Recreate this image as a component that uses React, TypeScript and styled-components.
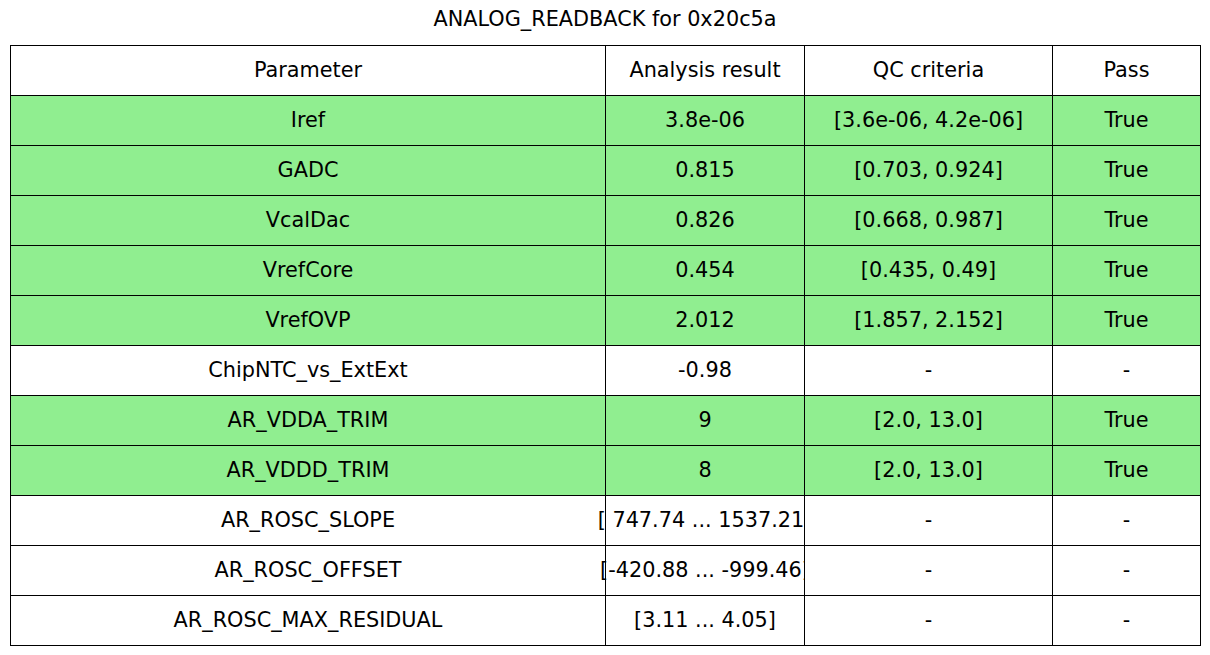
import styled, { createGlobalStyle } from 'styled-components';

const GlobalStyle = createGlobalStyle`
  html, body {
    margin: 0;
    padding: 0;
    background: #ffffff;
  }
  body {
    font-family: 'DejaVu Sans', 'Liberation Sans', sans-serif;
    color: #000000;
  }
`;

const Page = styled.div`
  width: 1210px;
  height: 655px;
  box-sizing: border-box;
  padding: 0 10px;
  display: flex;
  flex-direction: column;
`;

const Title = styled.h1`
  margin: 0;
  height: 45px;
  box-sizing: border-box;
  padding-top: 6px;
  text-align: center;
  font-size: 20.8px;
  font-weight: 400;
  line-height: 26px;
`;

const Table = styled.div`
  display: grid;
  grid-template-columns: 595px 199px 248px 148px;
  grid-auto-rows: 50px;
  width: 1191px;
  border-top: 1px solid #000;
  border-left: 1px solid #000;
  box-sizing: border-box;
`;

// positioned so a later cell paints over text spilling out of an earlier one
const Cell = styled('div')<{ pass?: boolean }>`
  position: relative;
  display: flex;
  align-items: center;
  justify-content: center;
  white-space: nowrap;
  border-right: 1px solid #000;
  border-bottom: 1px solid #000;
  box-sizing: border-box;
  background: ${(p) => (p.pass ? '#90ee90' : '#ffffff')};
  font-size: 20.8px;
  line-height: 1;
`;

type Row = [string, string, string, string];

const header: Row = ['Parameter', 'Analysis result', 'QC criteria', 'Pass'];

const rows: Row[] = [
  ['Iref', '3.8e-06', '[3.6e-06, 4.2e-06]', 'True'],
  ['GADC', '0.815', '[0.703, 0.924]', 'True'],
  ['VcalDac', '0.826', '[0.668, 0.987]', 'True'],
  ['VrefCore', '0.454', '[0.435, 0.49]', 'True'],
  ['VrefOVP', '2.012', '[1.857, 2.152]', 'True'],
  ['ChipNTC_vs_ExtExt', '-0.98', '-', '-'],
  ['AR_VDDA_TRIM', '9', '[2.0, 13.0]', 'True'],
  ['AR_VDDD_TRIM', '8', '[2.0, 13.0]', 'True'],
  ['AR_ROSC_SLOPE', '[ 747.74 ... 1537.21]', '-', '-'],
  ['AR_ROSC_OFFSET', '[-420.88 ... -999.46]', '-', '-'],
  ['AR_ROSC_MAX_RESIDUAL', '[3.11 ... 4.05]', '-', '-'],
];

const App = () => (
  <Page>
    <GlobalStyle />
    <Title>ANALOG_READBACK for 0x20c5a</Title>
    <Table>
      {header.map((h) => (
        <Cell key={h}>{h}</Cell>
      ))}
      {rows.map((r) =>
        r.map((v, i) => (
          <Cell key={r[0] + i} pass={r[3] === 'True'}>
            {v}
          </Cell>
        )),
      )}
    </Table>
  </Page>
);

export default App;
